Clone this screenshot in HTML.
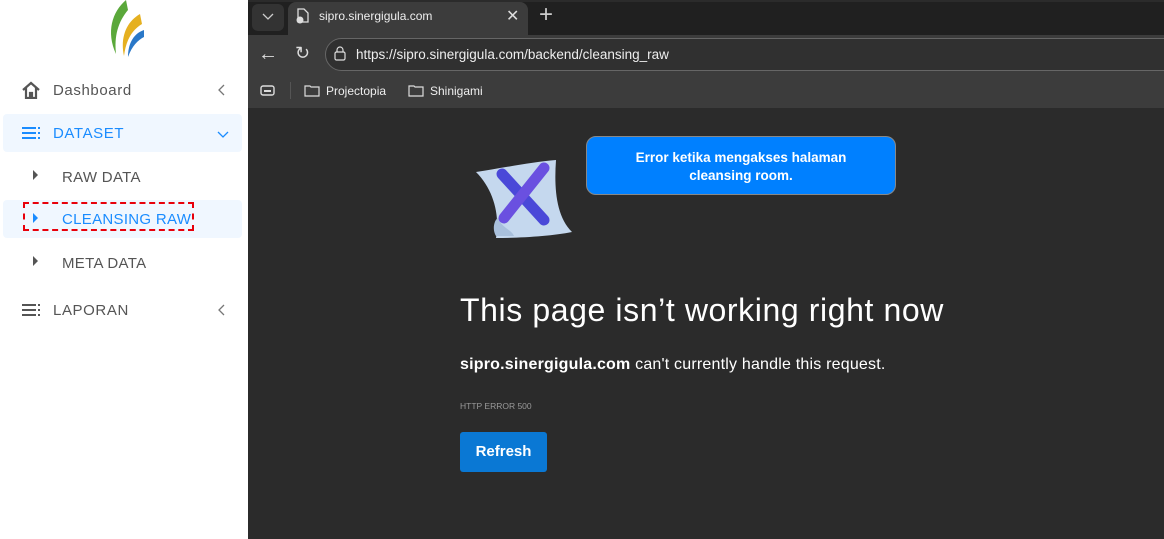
<!DOCTYPE html>
<html><head><meta charset="utf-8"><style>
*{margin:0;padding:0;box-sizing:border-box}
body{width:1164px;height:539px;overflow:hidden;background:#fff;font-family:"Liberation Sans",sans-serif;position:relative}
.a{position:absolute}
.side{left:0;top:0;width:248px;height:539px;background:#fff}
.item{position:absolute;left:53px;font-size:15px;color:#555;letter-spacing:.6px}
.sub{position:absolute;left:62px;font-size:15px;color:#555;letter-spacing:.3px}
.tri{position:absolute;width:0;height:0;border-left:5px solid #555;border-top:5px solid transparent;border-bottom:5px solid transparent}
.br{left:248px;top:0;width:916px;height:539px;background:#2b2b2b}
.chev{position:absolute;left:217px}
</style></head><body>
<div class="a side">
 <svg class="a" style="left:104px;top:0" width="40" height="58" viewBox="0 0 40 58">
  <path d="M22 0 C8 12 2 32 12 54 C10 36 14 22 24 10 Z" fill="#5aa83a"/>
  <path d="M36 14 C22 22 16 38 20 56 C22 40 28 30 38 24 Z" fill="#e5b020"/>
  <path d="M40 30 C28 34 24 46 24 57 C28 46 34 40 40 37 Z" fill="#2a78c8"/>
 </svg>
 <svg class="a" style="left:21px;top:81px" width="20" height="18" viewBox="0 0 20 18"><path d="M2 9 L10 2 L18 9 M5 7 V17 H9 V12 H11 V17 H15 V7" fill="none" stroke="#555" stroke-width="2.2"/></svg>
 <div class="item" style="top:82px">Dashboard</div>
 <svg class="chev" style="top:84px" width="8" height="12"><path d="M7 1 L2 6 L7 11" fill="none" stroke="#777" stroke-width="1.3"/></svg>
 <div class="a" style="left:3px;top:114px;width:239px;height:38px;background:#f0f7ff;border-radius:4px"></div>
 <svg class="a" style="left:22px;top:127px" width="20" height="12"><g fill="#1a8cff"><rect x="0" y="0" width="14" height="2"/><rect x="0" y="5" width="14" height="2"/><rect x="0" y="10" width="14" height="2"/><rect x="16" y="0" width="2" height="2"/><rect x="16" y="5" width="2" height="2"/><rect x="16" y="10" width="2" height="2"/></g></svg>
 <div class="item" style="top:125px;color:#1a8cff">DATASET</div>
 <svg class="a" style="left:217px;top:131px" width="12" height="8"><path d="M1 1 L6 6 L11 1" fill="none" stroke="#1a8cff" stroke-width="1.3"/></svg>
 <div class="tri" style="left:33px;top:170px"></div>
 <div class="sub" style="top:169px">RAW DATA</div>
 <div class="a" style="left:3px;top:200px;width:239px;height:38px;background:#f0f7ff;border-radius:4px"></div>
 <div class="a" style="left:23px;top:202px;width:171px;height:29px;border:2.5px dashed #e8000b"></div>
 <div class="tri" style="left:33px;top:213px;border-left-color:#1a8cff"></div>
 <div class="sub" style="top:211px;color:#1a8cff">CLEANSING RAW</div>
 <div class="tri" style="left:33px;top:256px"></div>
 <div class="sub" style="top:255px">META DATA</div>
 <svg class="a" style="left:22px;top:304px" width="20" height="12"><g fill="#555"><rect x="0" y="0" width="14" height="2"/><rect x="0" y="5" width="14" height="2"/><rect x="0" y="10" width="14" height="2"/><rect x="16" y="0" width="2" height="2"/><rect x="16" y="5" width="2" height="2"/><rect x="16" y="10" width="2" height="2"/></g></svg>
 <div class="item" style="top:302px">LAPORAN</div>
 <svg class="chev" style="top:304px" width="8" height="12"><path d="M7 1 L2 6 L7 11" fill="none" stroke="#777" stroke-width="1.3"/></svg>
</div>
<div class="a br">
 <div class="a" style="left:0;top:2px;width:916px;height:33px;background:#202020"></div>
 <div class="a" style="left:4px;top:4px;width:32px;height:27px;background:#333;border-radius:6px"></div>
 <svg class="a" style="left:14px;top:13px" width="12" height="8"><path d="M1 1 L6 6 L11 1" fill="none" stroke="#ccc" stroke-width="1.3"/></svg>
 <div class="a" style="left:40px;top:2px;width:240px;height:33px;background:#3c3c3c;border-radius:8px 8px 0 0"></div>
 <svg class="a" style="left:48px;top:8px" width="14" height="16"><path d="M2 1 H8 L12 5 V14 H2 Z" fill="none" stroke="#ddd" stroke-width="1.3"/><circle cx="4" cy="12" r="3.5" fill="#ddd"/></svg>
 <div class="a" style="left:71px;top:9px;color:#eee;font-size:12px">sipro.sinergigula.com</div>
 <div class="a" style="left:258px;top:6px;color:#ddd;font-size:16px">&#x2715;</div>
 <div class="a" style="left:291px;top:1px;color:#ccc;font-size:24px;font-weight:300">+</div>
 <div class="a" style="left:0;top:35px;width:916px;height:73px;background:#3c3c3c"></div>
 <div class="a" style="left:10px;top:43px;color:#ddd;font-size:20px">&larr;</div>
 <div class="a" style="left:47px;top:43px;color:#ddd;font-size:18px">&#x21bb;</div>
 <div class="a" style="left:77px;top:38px;width:860px;height:33px;background:#303030;border:1px solid #666;border-radius:17px"></div>
 <svg class="a" style="left:86px;top:46px" width="12" height="15"><rect x="1" y="6" width="10" height="8" rx="1.5" fill="none" stroke="#ddd" stroke-width="1.2"/><path d="M3 6 V4 a3 3 0 0 1 6 0 V6" fill="none" stroke="#ddd" stroke-width="1.2"/></svg>
 <div class="a" style="left:108px;top:47px;color:#eee;font-size:13.5px">https://sipro.sinergigula.com/backend/cleansing_raw</div>
 <svg class="a" style="left:12px;top:85px" width="16" height="12"><rect x="1" y="1" width="13" height="9" rx="2" fill="none" stroke="#ddd" stroke-width="1.4"/><rect x="4" y="5" width="7" height="2" fill="#ddd"/></svg>
 <div class="a" style="left:42px;top:82px;width:1px;height:17px;background:#555"></div>
 <svg class="a" style="left:56px;top:84px" width="16" height="13"><path d="M1 2 H6 L7 3 H15 V12 H1 Z" fill="none" stroke="#ddd" stroke-width="1.2"/></svg>
 <div class="a" style="left:78px;top:84px;color:#eee;font-size:12px">Projectopia</div>
 <svg class="a" style="left:160px;top:84px" width="16" height="13"><path d="M1 2 H6 L7 3 H15 V12 H1 Z" fill="none" stroke="#ddd" stroke-width="1.2"/></svg>
 <div class="a" style="left:182px;top:84px;color:#eee;font-size:12px">Shinigami</div>
 <svg class="a" style="left:224px;top:158px" width="104" height="82" viewBox="0 0 104 82">
  <path d="M4 14 C30 10 60 4 84 2 C82 30 84 58 100 74 C80 78 50 80 24 80 C28 58 22 32 4 14 Z" fill="#c5d8ee"/>
  <path d="M24 78 C20 72 22 62 26 60 C30 70 40 72 42 78 Z" fill="#a9c0dc"/>
  <path d="M30 16 L72 62" stroke="#4a48d8" stroke-width="11" stroke-linecap="round"/>
  <path d="M72 10 L32 60" stroke="#6a50e0" stroke-width="11" stroke-linecap="round"/>
 </svg>
 <div class="a" style="left:338px;top:136px;width:310px;height:59px;background:#0080ff;border:1px solid #888;border-radius:10px;color:#fff;font-weight:bold;font-size:13.5px;text-align:center;padding-top:12px;line-height:18px">Error ketika mengakses halaman<br>cleansing room.</div>
 <div class="a" style="left:212px;top:292px;color:#fff;font-size:32px;letter-spacing:.6px">This page isn’t working right now</div>
 <div class="a" style="left:212px;top:356px;color:#fff;font-size:16px;letter-spacing:.2px"><b>sipro.sinergigula.com</b> can't currently handle this request.</div>
 <div class="a" style="left:212px;top:401px;color:#999;font-size:8.5px">HTTP ERROR 500</div>
 <div class="a" style="left:212px;top:432px;width:87px;height:40px;background:#0a78d4;border-radius:3px;color:#fff;font-weight:bold;font-size:15px;text-align:center;line-height:40px">Refresh</div>
</div>
</body></html>
